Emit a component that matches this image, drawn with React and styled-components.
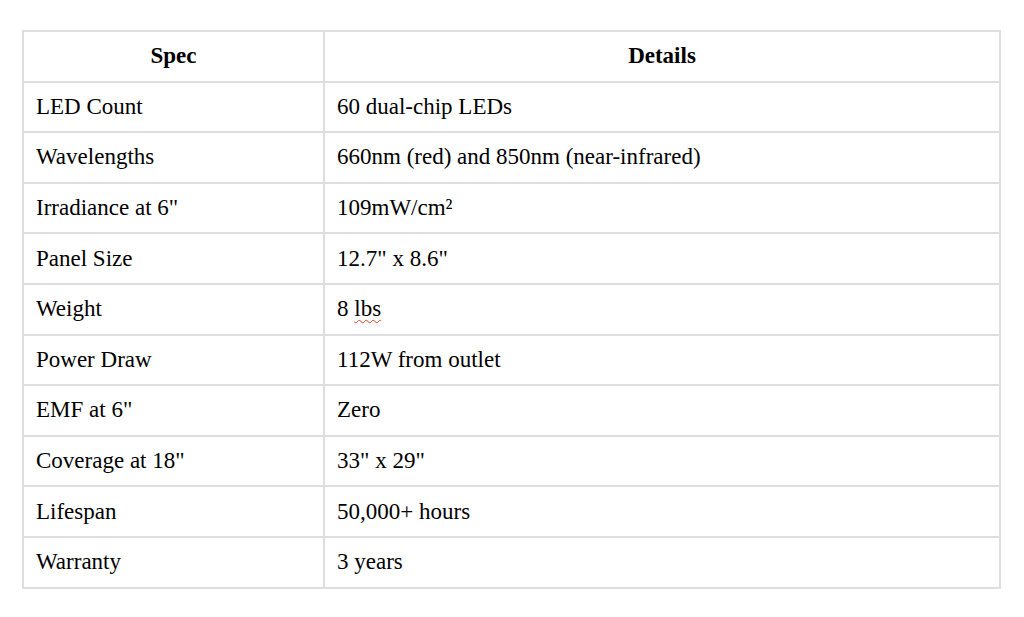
import React from 'react';
import styled, { createGlobalStyle } from 'styled-components';

const GlobalStyle = createGlobalStyle`
  html, body {
    margin: 0;
    padding: 0;
    background: #ffffff;
  }
  body {
    font-family: "Liberation Serif", "Times New Roman", serif;
    color: #000000;
  }
`;

const Page = styled.div`
  padding: 30px 0 0 22px;
`;

const Table = styled.table`
  border-collapse: collapse;
  width: 979px;
  table-layout: fixed;
  font-size: 23px;
`;

const HeadCell = styled.th`
  height: 46.6px;
  padding: 0 0 2px 0;
  border: 2px solid #dedede;
  font-weight: bold;
  text-align: center;
  vertical-align: middle;
  line-height: 1;
  width: ${(p) => p.width || 'auto'};
`;

const Cell = styled.td`
  height: 47.6px;
  padding: 0 0 1px 12px;
  border: 2px solid #dedede;
  vertical-align: middle;
  line-height: 1;
`;

const Misspelled = styled.span`
  text-decoration: underline wavy #e0402f;
  text-decoration-thickness: 1px;
  text-underline-offset: 3px;
`;

const specs = [
  ['LED Count', '60 dual-chip LEDs'],
  ['Wavelengths', '660nm (red) and 850nm (near-infrared)'],
  ['Irradiance at 6"', '109mW/cm²'],
  ['Panel Size', '12.7" x 8.6"'],
  ['Weight', <>8 <Misspelled>lbs</Misspelled></>],
  ['Power Draw', '112W from outlet'],
  ['EMF at 6"', 'Zero'],
  ['Coverage at 18"', '33" x 29"'],
  ['Lifespan', '50,000+ hours'],
  ['Warranty', '3 years'],
];

const App = () => (
  <React.Fragment>
    <GlobalStyle />
    <Page>
      <Table>
        <thead>
          <tr>
            <HeadCell width="299px">Spec</HeadCell>
            <HeadCell>Details</HeadCell>
          </tr>
        </thead>
        <tbody>
          {specs.map(([name, value], i) => (
            <tr key={i}>
              <Cell>{name}</Cell>
              <Cell>{value}</Cell>
            </tr>
          ))}
        </tbody>
      </Table>
    </Page>
  </React.Fragment>
);

export default App;
